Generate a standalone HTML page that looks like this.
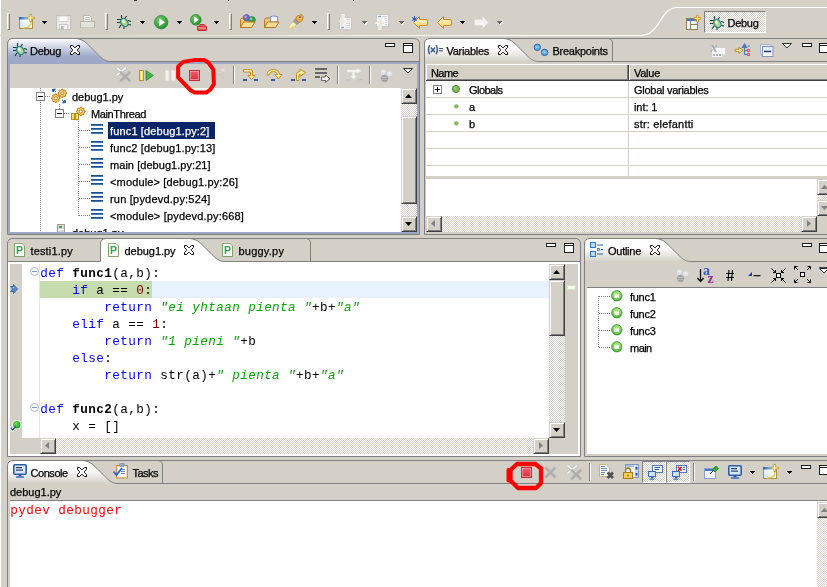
<!DOCTYPE html>
<html>
<head>
<meta charset="utf-8">
<title>Debug - Eclipse</title>
<style>
html,body{margin:0;padding:0;overflow:hidden;}
body{width:827px;height:587px;overflow:hidden;background:#d4d0c8;position:relative;font-family:"Liberation Sans",sans-serif;font-size:11px;color:#000;}
.a{position:absolute;}
.t{position:absolute;white-space:pre;font-size:11px;line-height:13px;-webkit-text-stroke:0.25px currentColor;}
.m{position:absolute;white-space:pre;font-family:"Liberation Mono",monospace;font-size:12.67px;letter-spacing:0.398px;line-height:17px;color:#000;}
.k{color:#0000ff;}
.s{color:#00aa00;font-style:italic;}
.n{color:#800000;}
.b{font-weight:bold;}
.sep{position:absolute;width:3px;box-sizing:border-box;border:1px solid;border-color:#fff #808080 #808080 #fff;}
.sep2{position:absolute;width:1px;background:#808080;border-right:1px solid #fff;}
.arr{position:absolute;width:0;height:0;border-left:3px solid transparent;border-right:3px solid transparent;border-top:3px solid #000;}
.arr.g{border-top-color:#808080;}
.sb{position:absolute;background:#d4d0c8;box-sizing:border-box;border:1px solid;border-color:#d4d0c8 #404040 #404040 #d4d0c8;box-shadow:inset 1px 1px 0 #fff,inset -1px -1px 0 #808080;}
.track,.chk{background-color:#fff;background-image:linear-gradient(45deg,#d4d0c8 25%,transparent 25%,transparent 75%,#d4d0c8 75%),linear-gradient(45deg,#d4d0c8 25%,transparent 25%,transparent 75%,#d4d0c8 75%);background-size:2px 2px;background-position:0 0,1px 1px;}
.track{position:absolute;}
.min{position:absolute;width:8px;height:2px;border:1px solid #1c1c1c;background:#fff;}
.max{position:absolute;width:8px;height:8px;border:1px solid #1c1c1c;background:linear-gradient(#fff 0,#fff 1px,#1c1c1c 1px,#1c1c1c 2px,#fff 2px);}
svg{position:absolute;overflow:visible;}
</style>
</head>
<body>
<div id="root" style="position:absolute;left:0;top:0;width:827px;height:587px;will-change:transform;overflow:hidden;">
<div class="a" style="left:0px;top:0px;width:1px;height:587px;background:#fff;"></div>
<div class="a" style="left:134px;top:0px;width:3px;height:1px;background:#303030;"></div>
<div class="a" style="left:228px;top:0px;width:1px;height:1px;background:#303030;"></div>
<div class="a" style="left:353px;top:0px;width:1px;height:1px;background:#303030;"></div>
<div class="sep" style="left:7px;top:13px;height:17px;"></div>
<div class="sep" style="left:105px;top:13px;height:17px;"></div>
<div class="sep" style="left:229px;top:13px;height:17px;"></div>
<div class="sep" style="left:327px;top:13px;height:17px;"></div>
<svg width="5" height="3" viewBox="0 0 5 3" style="left:42px;top:21px;"><path d="M0,0 h5 v1 h-1 v1 h-1 v1 h-1 v-1 h-1 v-1 h-1 z" fill="#000"/></svg>
<svg width="5" height="3" viewBox="0 0 5 3" style="left:140px;top:21px;"><path d="M0,0 h5 v1 h-1 v1 h-1 v1 h-1 v-1 h-1 v-1 h-1 z" fill="#000"/></svg>
<svg width="5" height="3" viewBox="0 0 5 3" style="left:177px;top:21px;"><path d="M0,0 h5 v1 h-1 v1 h-1 v1 h-1 v-1 h-1 v-1 h-1 z" fill="#000"/></svg>
<svg width="5" height="3" viewBox="0 0 5 3" style="left:214px;top:21px;"><path d="M0,0 h5 v1 h-1 v1 h-1 v1 h-1 v-1 h-1 v-1 h-1 z" fill="#000"/></svg>
<svg width="5" height="3" viewBox="0 0 5 3" style="left:312px;top:21px;"><path d="M0,0 h5 v1 h-1 v1 h-1 v1 h-1 v-1 h-1 v-1 h-1 z" fill="#000"/></svg>
<svg width="5" height="3" viewBox="0 0 5 3" style="left:460px;top:21px;"><path d="M0,0 h5 v1 h-1 v1 h-1 v1 h-1 v-1 h-1 v-1 h-1 z" fill="#000"/></svg>
<svg width="6" height="4" viewBox="0 0 6 4" style="left:362px;top:21px;"><path d="M1,1 h5 v1 h-1 v1 h-1 v1 h-1 v-1 h-1 v-1 h-1 z" fill="#fff"/><path d="M0,0 h5 v1 h-1 v1 h-1 v1 h-1 v-1 h-1 v-1 h-1 z" fill="#686868"/></svg>
<svg width="6" height="4" viewBox="0 0 6 4" style="left:399px;top:21px;"><path d="M1,1 h5 v1 h-1 v1 h-1 v1 h-1 v-1 h-1 v-1 h-1 z" fill="#fff"/><path d="M0,0 h5 v1 h-1 v1 h-1 v1 h-1 v-1 h-1 v-1 h-1 z" fill="#686868"/></svg>
<svg width="6" height="4" viewBox="0 0 6 4" style="left:497px;top:21px;"><path d="M1,1 h5 v1 h-1 v1 h-1 v1 h-1 v-1 h-1 v-1 h-1 z" fill="#fff"/><path d="M0,0 h5 v1 h-1 v1 h-1 v1 h-1 v-1 h-1 v-1 h-1 z" fill="#686868"/></svg>
<svg width="827" height="40" viewBox="0 0 827 40" style="left:0px;top:0px;"><defs><linearGradient id="pg" gradientUnits="userSpaceOnUse" x1="0" y1="0" x2="560" y2="0"><stop offset="0" stop-color="#d8d4cc"/><stop offset="1" stop-color="#ffffff"/></linearGradient></defs><path d="M0,35.5 L640,35.5 C652,35.5 656,27 661,19.6 C666,12 669,7.5 678,7.5 L827,7.5" fill="none" stroke="url(#pg)" stroke-width="1.2"/></svg>
<div class="a chk" style="left:704px;top:11px;width:62px;height:22px;box-sizing:border-box;border:1px solid;border-color:#808080 #fff #fff #808080;"></div>
<div class="t" style="left:727.5px;top:17px;letter-spacing:-0.283px;">Debug</div>
<svg width="16" height="16" viewBox="0 0 16 16" style="left:19px;top:14px;">
<defs><linearGradient id="nwg19" x1="0" y1="1" x2="1" y2="0"><stop offset="0" stop-color="#c4e0f8"/><stop offset="0.700" stop-color="#ffffff"/></linearGradient>
<linearGradient id="nwt19" x1="0" y1="0" x2="1" y2="0"><stop offset="0" stop-color="#2060c0"/><stop offset="1" stop-color="#a0c4ec"/></linearGradient></defs>
<rect x="0.500" y="3.500" width="13" height="11" fill="url(#nwg19)" stroke="#a89048" stroke-width="1"/>
<rect x="0" y="3" width="9" height="2.500" fill="url(#nwt19)"/>
<path d="M12.300,7 C12.300,11 9.500,13.800 4.500,14" fill="none" stroke="#f0c840" stroke-width="1.300"/>
<path d="M11.700,1 L11.700,7 M8.700,4 L14.700,4" stroke="#c8a020" stroke-width="2.600" stroke-linecap="round"/>
<path d="M11.700,1.200 L11.700,6.800 M8.900,4 L14.500,4" stroke="#fffad0" stroke-width="1"/>
</svg>
<svg width="15" height="15" viewBox="0 0 15 15" style="left:56px;top:15px;">
<rect x="0.500" y="0.500" width="14" height="14" fill="#ecebe8" stroke="#c2c0bc"/>
<rect x="3" y="1" width="9" height="5.500" fill="#fbfbfa" stroke="#d0ceca" stroke-width="0.800"/>
<rect x="3.500" y="9.500" width="8" height="5" fill="#f4f3f0" stroke="#c4c2be" stroke-width="0.800"/>
<rect x="5" y="11" width="2.500" height="3.500" fill="#b4b2ae"/>
</svg>
<svg width="15" height="15" viewBox="0 0 15 15" style="left:80px;top:15px;">
<path d="M3.500,6 L3.5,0.500 L9.5,0.5 L11.5,2.5 L11.5,6" fill="#f8f8f6" stroke="#b8b4ac"/>
<path d="M5,2.500 L10,2.500 M5,4.500 L10,4.500" stroke="#c0bcb4" stroke-width="1"/>
<rect x="0.5" y="6.5" width="14" height="6" fill="#e4e2dc" stroke="#b8b4ac"/>
<rect x="1.500" y="12" width="12" height="2" fill="#d0ccc4"/>
</svg>
<svg width="16" height="16" viewBox="0 0 16 16" style="left:116px;top:14px;">
<g stroke="#0e4430" stroke-width="1.150" fill="none">
<path d="M5.5,1 L5.5,4.5 M10.5,2 L9,4.5 M1,5.500 L5,5.5 M1,8.5 L4,8.5 M12,6.500 L15,7.5 M12,10.5 L15,11 M3,14 L5,11 M8,15 L8,12.500"/>
</g>
<ellipse cx="8.300" cy="8.5" rx="3.3" ry="4.4" transform="rotate(-35 8.3 8.5)" fill="#a8d890" stroke="#2a7c8c" stroke-width="1.2"/>
<ellipse cx="7.500" cy="7.5" rx="1.3" ry="2" transform="rotate(-35 7.5 7.5)" fill="#e4f4c8"/>
</svg>
<svg width="14.4" height="14.4" viewBox="0 0 14.4 14.4" style="left:153.5px;top:14.5px;">
<defs><radialGradient id="rg153" cx="0.4" cy="0.35" r="0.7"><stop offset="0" stop-color="#7cd070"/><stop offset="1" stop-color="#1c8c28"/></radialGradient></defs>
<circle cx="7.2" cy="7.2" r="6.7" fill="url(#rg153)" stroke="#2c8c34" stroke-width="0.8"/>
<path d="M5.184,3.24 L5.184,11.16 L10.8,7.2 Z" fill="#ffffff"/>
</svg>
<svg width="11.6" height="11.6" viewBox="0 0 11.6 11.6" style="left:190px;top:14px;">
<defs><radialGradient id="rg190" cx="0.4" cy="0.35" r="0.7"><stop offset="0" stop-color="#7cd070"/><stop offset="1" stop-color="#1c8c28"/></radialGradient></defs>
<circle cx="5.8" cy="5.8" r="5.3" fill="url(#rg190)" stroke="#2c8c34" stroke-width="0.8"/>
<path d="M4.176,2.61 L4.176,8.99 L8.7,5.8 Z" fill="#ffffff"/>
</svg>
<svg width="10" height="7" viewBox="0 0 10 7" style="left:197px;top:23.5px;">
<rect x="3" y="0.5" width="4" height="2" fill="none" stroke="#c82828" stroke-width="1"/>
<rect x="0.5" y="2" width="9" height="4.500" rx="0.8" fill="#e85050" stroke="#c02020" stroke-width="1"/>
<rect x="1" y="3.5" width="8" height="1" fill="#f8b0b0"/>
</svg>
<svg width="16" height="16" viewBox="0 0 16 16" style="left:240px;top:14px;">
<path d="M0.500,13.5 L0.5,5.500 L2,4 L6,4 L7,5.500 L11.500,5.5 L11.500,8" fill="#f0c878" stroke="#b87820" stroke-width="1"/>
<circle cx="6.500" cy="3.8" r="3.2" fill="#7868c0" stroke="#5848a0" stroke-width="0.6"/><circle cx="5.5" cy="2.800" r="1.2" fill="#b0a8e0"/><circle cx="12" cy="6" r="3.4" fill="#38a058" stroke="#1c7838" stroke-width="0.6"/><circle cx="11" cy="4.800" r="1.2" fill="#88d8a0"/>
<path d="M0.5,13.500 L3.5,8 L15,8 L11.5,13.5 Z" fill="#f8dc98" stroke="#b87820" stroke-width="1"/>
</svg>
<svg width="16" height="16" viewBox="0 0 16 16" style="left:264px;top:14px;">
<path d="M0.500,13.5 L0.5,5.500 L2,4 L6,4 L7,5.500 L11.500,5.5 L11.500,8" fill="#f0c878" stroke="#b87820" stroke-width="1"/>
<rect x="6.5" y="2.500" width="7" height="5.5" fill="#f4f8ff" stroke="#8098c8" stroke-width="1"/><rect x="8" y="1" width="4" height="2" fill="#a8b8e0"/>
<path d="M0.5,13.500 L3.5,8 L15,8 L11.5,13.5 Z" fill="#f8dc98" stroke="#b87820" stroke-width="1"/>
</svg>
<svg width="16" height="16" viewBox="0 0 16 16" style="left:288px;top:14px;">
<path d="M9,2 L13.500,0.500 L15.5,2.5 L14,7 L11,8.500 L7.500,5 Z" fill="#f0b040" stroke="#c07818" stroke-width="0.800"/>
<circle cx="12" cy="3.200" r="0.9" fill="#3858b0"/>
<path d="M7.5,5 L11,8.5 L8.500,11 L5,7.500 Z" fill="#a09c98" stroke="#787470" stroke-width="0.6"/>
<path d="M5,7.5 L8.500,11 L2,15 L0.5,13.5 Z" fill="#fff8d0" stroke="#e8c050" stroke-width="0.800"/>
<path d="M1,14.500 L5,11.500 L6.500,12" fill="#f8d060"/>
</svg>
<svg width="15" height="16" viewBox="0 0 15 16" style="left:337px;top:14px;">
<rect x="2.500" y="3.500" width="12" height="12" fill="#f6f6f6" stroke="#c8c8cc"/>
<path d="M9,5.500 L13,5.500 M10,7.500 L13,7.500 M9,9.500 L13,9.500 M8,11.500 L13,11.500 M8,13.500 L13,13.500" stroke="#d4d4d8" stroke-width="1"/>
<rect x="4.300" y="12.800" width="2.600" height="1.400" fill="#8890a8"/>
<path d="M4.300,0.500 L7.200,0.500 L7.200,6.500 L9.700,6.500 L5.700,11.600 L1.500,6.500 L4.300,6.500 Z" fill="#ece9df" stroke="#f8f7f3" stroke-width="0.800"/>
<path d="M4.300,0.500 L4.300,6.500 L1.500,6.500 L5.700,11.600" fill="none" stroke="#d8d4c8" stroke-width="0.600"/>
</svg>
<svg width="15" height="16" viewBox="0 0 15 16" style="left:375px;top:14px;">
<rect x="1.500" y="0.500" width="12" height="12" fill="#f6f6f6" stroke="#c8c8cc"/>
<path d="M7,2.500 L12,2.500 M9,4.500 L12,4.500 M10,6.500 L12,6.500 M10,8.500 L12,8.500 M10,10.500 L12,10.500" stroke="#d4d4d8" stroke-width="1"/>
<rect x="3.300" y="1.800" width="2.600" height="1.400" fill="#8890a8"/>
<path d="M3.300,15.500 L6.200,15.500 L6.200,9.500 L8.700,9.500 L4.700,4.400 L0.500,9.500 L3.300,9.500 Z" fill="#ece9df" stroke="#f8f7f3" stroke-width="0.800"/>
<path d="M6.200,15.500 L6.200,9.500 L8.700,9.500 L4.700,4.400" fill="none" stroke="#d8d4c8" stroke-width="0.600"/>
</svg>
<svg width="15" height="13" viewBox="0 0 15 13" style="left:413px;top:15.5px;">
<defs><linearGradient id="yag" x1="0" y1="0" x2="0" y2="1"><stop offset="0" stop-color="#fff8d8"/><stop offset="1" stop-color="#f8d060"/></linearGradient></defs>
<g><path d="M0.5,6.500 L6.500,0.500 L6.5,3.500 L13,3.5 Q14.5,3.5 14.5,5 L14.5,8 Q14.5,9.5 13,9.5 L6.500,9.5 L6.5,12.500 Z" fill="url(#yag)" stroke="#d08818" stroke-width="1" stroke-linejoin="round"/></g><path d="M1.500,0 L1.500,6 M-1,1.500 L4,4.500 M4,1.500 L-1,4.500" stroke="#2050b0" stroke-width="0.900"/>
</svg>
<svg width="15" height="13" viewBox="0 0 15 13" style="left:437px;top:15.5px;">
<defs><linearGradient id="yag" x1="0" y1="0" x2="0" y2="1"><stop offset="0" stop-color="#fff8d8"/><stop offset="1" stop-color="#f8d060"/></linearGradient></defs>
<g><path d="M0.5,6.500 L6.500,0.500 L6.5,3.500 L13,3.5 Q14.5,3.5 14.5,5 L14.5,8 Q14.5,9.5 13,9.5 L6.500,9.5 L6.5,12.500 Z" fill="url(#yag)" stroke="#d08818" stroke-width="1" stroke-linejoin="round"/></g>
</svg>
<svg width="15" height="13" viewBox="0 0 15 13" style="left:474px;top:15.5px;">
<defs><linearGradient id="yag" x1="0" y1="0" x2="0" y2="1"><stop offset="0" stop-color="#fff8d8"/><stop offset="1" stop-color="#f8d060"/></linearGradient></defs>
<g transform="translate(15,0) scale(-1,1)"><path d="M0.5,6.500 L6.500,0.500 L6.5,3.500 L13,3.5 Q14.5,3.5 14.5,5 L14.5,8 Q14.5,9.5 13,9.5 L6.500,9.5 L6.5,12.500 Z" fill="#f4f3ef" stroke="#e0ded8" stroke-width="1" stroke-linejoin="round"/></g>
</svg>
<svg width="15" height="15" viewBox="0 0 15 15" style="left:686px;top:14.5px;">
<rect x="0.5" y="3.5" width="11" height="11" fill="#ecf4ff" stroke="#908050" stroke-width="1"/>
<rect x="1" y="4" width="10" height="2" fill="#4878c8"/>
<path d="M4.500,6 L4.5,14 M4.500,9.500 L11,9.5" stroke="#908050" stroke-width="1"/>
<path d="M11.5,0 L11.5,7 M8,3.500 L15,3.500" stroke="#c89820" stroke-width="2.600"/>
<path d="M11.500,0.700 L11.5,6.300 M8.700,3.500 L14.300,3.5" stroke="#fff4b0" stroke-width="1"/>
</svg>
<svg width="16" height="16" viewBox="0 0 16 16" style="left:708.5px;top:14.5px;">
<g stroke="#0e4430" stroke-width="1.150" fill="none">
<path d="M5.5,1 L5.5,4.5 M10.5,2 L9,4.5 M1,5.500 L5,5.5 M1,8.5 L4,8.5 M12,6.500 L15,7.5 M12,10.5 L15,11 M3,14 L5,11 M8,15 L8,12.500"/>
</g>
<ellipse cx="8.300" cy="8.5" rx="3.3" ry="4.4" transform="rotate(-35 8.3 8.5)" fill="#a8d890" stroke="#2a7c8c" stroke-width="1.2"/>
<ellipse cx="7.500" cy="7.5" rx="1.3" ry="2" transform="rotate(-35 7.5 7.5)" fill="#e4f4c8"/>
</svg>
<svg width="827" height="240" viewBox="0 0 827 240" style="left:0px;top:0px;">
<defs><linearGradient id="gact" x1="0" y1="0" x2="0" y2="1"><stop offset="0" stop-color="#ffffff"/><stop offset="0.15" stop-color="#e6e9f3"/><stop offset="0.7" stop-color="#9fa9c8"/><stop offset="1" stop-color="#9da7c6"/></linearGradient></defs>
<rect x="8" y="62" width="411" height="172" fill="#9da7c6"/>
<path d="M8,64 L8,44 Q8,39 13,39 L76,39 C82,39.5 85,42 90,47 L98,55 C102,59 105,61.5 111,61.5 L111,64 Z" fill="url(#gact)"/>
<path d="M76,38.5 C82,39 85,41.5 90,46.5 L98,54.5 C102,58.5 105,61.5 111,61.5 L419,61.5" fill="none" stroke="#808080" stroke-width="1"/>
<path d="M7.5,234.5 L7.5,44 Q7.5,38.5 13,38.5 L414,38.5 Q419.5,38.5 419.5,44 L419.5,234.5 Z" fill="none" stroke="#808080" stroke-width="1"/>
<rect x="10" y="64" width="407" height="24" fill="#d4d0c8"/>
<rect x="10" y="88" width="407" height="144" fill="#ffffff"/>
</svg>
<div class="t" style="left:30px;top:45px;letter-spacing:-0.283px;">Debug</div>
<svg width="10" height="10" viewBox="0 0 10 10" style="left:70px;top:45px;"><polygon points="0.5,0.5 2.5,0.5 4.5,2.5 5.5,2.5 7.5,0.5 9.5,0.5 9.5,2.5 7.5,4.5 7.5,5.5 9.5,7.5 9.5,9.5 7.5,9.5 5.5,7.5 4.5,7.5 2.5,9.5 0.5,9.5 0.5,7.5 2.5,5.5 2.5,4.5 0.5,2.5" fill="#fff" stroke="#000" stroke-width="1"/></svg>
<div class="min" style="left:385px;top:43px;"></div>
<div class="max" style="left:403px;top:43px;"></div>
<div class="a" style="left:108px;top:122px;width:107px;height:17px;background:#0a246a;"></div>
<div class="t" style="left:72px;top:91px;letter-spacing:-0.009px;">debug1.py</div>
<div class="t" style="left:91px;top:108px;letter-spacing:-0.369px;">MainThread</div>
<div class="t" style="left:110px;top:125px;letter-spacing:0.151px;color:#fff;">func1 [debug1.py:2]</div>
<div class="t" style="left:110px;top:142px;letter-spacing:0.133px;">func2 [debug1.py:13]</div>
<div class="t" style="left:110px;top:159px;letter-spacing:0.049px;">main [debug1.py:21]</div>
<div class="t" style="left:110px;top:176px;letter-spacing:0.154px;">&lt;module&gt; [debug1.py:26]</div>
<div class="t" style="left:110px;top:193px;letter-spacing:0.210px;">run [pydevd.py:524]</div>
<div class="t" style="left:110px;top:210px;letter-spacing:0.186px;">&lt;module&gt; [pydevd.py:668]</div>
<div class="a" style="left:70px;top:225px;width:80px;height:7px;overflow:hidden;"><div class="t" style="left:2px;top:2px;">debug1.py</div></div>
<div class="track" style="left:401px;top:88px;width:16px;height:144px;"></div>
<div class="sb" style="left:401px;top:88px;width:16px;height:16px;"></div>
<svg width="7" height="4" viewBox="0 0 7 4" style="left:405px;top:94px;"><path d="M0,4 L3.5,0 L7,4 Z" fill="#000"/></svg>
<div class="sb" style="left:401px;top:116px;width:16px;height:88px;"></div>
<div class="sb" style="left:401px;top:216px;width:16px;height:16px;"></div>
<svg width="7" height="4" viewBox="0 0 7 4" style="left:405px;top:222px;"><path d="M0,0 L3.5,4 L7,0 Z" fill="#000"/></svg>
<svg width="60" height="50" viewBox="0 0 60 50" style="left:166px;top:50px;"><path d="M17.1,11.9 L28.1,10.1 L38.4,10.1 L42.6,12.8 L47.3,19.6 L47.9,34.1 L44.3,39.6 L40.1,42.6 L28.6,42.6 L24.3,40.1 L14.1,29.4 L12.1,27.3 L12.1,16.6 Z" fill="none" stroke="#ff0000" stroke-width="4" stroke-linejoin="round"/></svg>
<svg width="16" height="16" viewBox="0 0 16 16" style="left:12px;top:42px;">
<g stroke="#0e4430" stroke-width="1.150" fill="none">
<path d="M5.5,1 L5.5,4.5 M10.5,2 L9,4.5 M1,5.500 L5,5.5 M1,8.5 L4,8.5 M12,6.500 L15,7.5 M12,10.5 L15,11 M3,14 L5,11 M8,15 L8,12.500"/>
</g>
<ellipse cx="8.300" cy="8.5" rx="3.3" ry="4.4" transform="rotate(-35 8.3 8.5)" fill="#a8d890" stroke="#2a7c8c" stroke-width="1.2"/>
<ellipse cx="7.500" cy="7.5" rx="1.3" ry="2" transform="rotate(-35 7.5 7.5)" fill="#e4f4c8"/>
</svg>
<svg width="15" height="15" viewBox="0 0 15 15" style="left:116px;top:67px;"><path d="M1,1 L9.500,8 M9.500,1 L1,8" stroke="#c4c2bc" stroke-width="3" stroke-linecap="round"/><path d="M1,1 L9.500,8 M9.500,1 L1,8" stroke="#fdfdfd" stroke-width="1.600" stroke-linecap="round"/><path d="M5,5.500 L13.500,13.500 M13.500,5.500 L5,13.500" stroke="#c6c4be" stroke-width="3.400" stroke-linecap="round"/><path d="M5,5.500 L13.500,13.500 M13.500,5.500 L5,13.500" stroke="#acacac" stroke-width="1.900" stroke-linecap="round"/></svg>
<svg width="15" height="11" viewBox="0 0 15 11" style="left:139px;top:70px;"><rect x="0.5" y="0.5" width="4" height="10" fill="#f8e070" stroke="#c09020"/><rect x="2" y="1.5" width="1" height="8" fill="#fff8c0"/><path d="M7,0.500 L14.5,5.5 L7,10.5 Z" fill="#48b048" stroke="#2c8c34" stroke-width="0.8"/></svg>
<svg width="11" height="11" viewBox="0 0 11 11" style="left:165px;top:70px;"><rect x="0.5" y="0.5" width="3.5" height="10" fill="#f4f2ec" stroke="#e4e2dc"/><rect x="6.500" y="0.5" width="3.5" height="10" fill="#f4f2ec" stroke="#e4e2dc"/></svg>
<svg width="11" height="11" viewBox="0 0 11 11" style="left:189px;top:70px;"><defs><linearGradient id="tg189" x1="0" y1="0" x2="0" y2="1"><stop offset="0" stop-color="#f46070"/><stop offset="1" stop-color="#dc2838"/></linearGradient></defs><rect x="0.5" y="0.5" width="10" height="10" fill="url(#tg189)" stroke="#c8283c"/><rect x="1.5" y="1.5" width="8" height="8" fill="none" stroke="#f8a0a8" stroke-width="0.8"/></svg>
<svg width="10" height="14" viewBox="0 0 10 14" style="left:216px;top:67px;"><circle cx="7" cy="3" r="2.200" fill="#ecd8dc" stroke="#dcc8cc" stroke-width="0.6"/><path d="M7,5 L7,12 M1,7.500 L4,7.5 L4,10" stroke="#c4c4c8" stroke-width="0.900" fill="none"/></svg>
<div class="sep2" style="left:233px;top:66px;height:18px;"></div>
<div class="sep2" style="left:337px;top:66px;height:18px;"></div>
<div class="sep2" style="left:369px;top:66px;height:18px;"></div>
<svg width="17" height="14" viewBox="0 0 17 14" style="left:242px;top:68px;"><path d="M1.5,1.500 L8.5,1.5 Q10.5,1.5 10.5,3.500 L10.5,7.5 L13,7.500 L9.5,11.5 L6,7.500 L8.5,7.5 L8.5,4 L1.500,4 Z" fill="#fff0a0" stroke="#c48c1c" stroke-width="1" stroke-linejoin="round"/><rect x="1" y="11" width="4" height="2" fill="#2c5ca8"/><rect x="12" y="11" width="4" height="2" fill="#2c5ca8"/></svg>
<svg width="17" height="14" viewBox="0 0 17 14" style="left:266px;top:68px;"><path d="M1,7 Q1,1.500 7.5,1.5 Q13,1.5 13.500,6.500 L16,6.5 L12.5,11 L9,6.500 L11.500,6.5 Q11,3.500 7.5,3.5 Q3.500,3.500 3,7 Z" fill="#fff0a0" stroke="#c48c1c" stroke-width="1" stroke-linejoin="round"/><rect x="5" y="11" width="4" height="2" fill="#2c5ca8"/></svg>
<svg width="17" height="14" viewBox="0 0 17 14" style="left:290px;top:68px;"><path d="M6.500,12.500 L6.500,6.500 Q6.500,3.500 10,3.5 L10,1 L15.5,4.700 L10,8.5 L10,6 Q9,6 9,7.500 L9,12.5 Z" fill="#fff0a0" stroke="#c48c1c" stroke-width="1" stroke-linejoin="round"/><rect x="1" y="11" width="4" height="2" fill="#2c5ca8"/><rect x="12" y="11" width="4" height="2" fill="#2c5ca8"/></svg>
<svg width="16" height="15" viewBox="0 0 16 15" style="left:315px;top:68px;"><rect x="0" y="0" width="12" height="2" fill="#686868"/><rect x="0" y="4" width="12" height="2" fill="#686868"/><rect x="0" y="8" width="5" height="2" fill="#686868"/><path d="M6.500,9 L10.500,9 L10.5,7 L15,10.700 L10.500,14.500 L10.5,12.500 L6.5,12.5 Z" fill="#f4f4f4" stroke="#585858" stroke-width="0.900"/></svg>
<svg width="16" height="14" viewBox="0 0 16 14" style="left:346px;top:68px;"><path d="M1,2 L11,2 L11,0.500 L15,3 L11,5.500 L11,4 L8.500,4 L8.5,8 L10.500,8 L7.5,11 L4.500,8 L6.500,8 L6.500,4 L1,4 Z" fill="#fbfaf8" stroke="#e4e2dc" stroke-width="0.6"/><rect x="0" y="11" width="4" height="1.500" fill="#c4c2c8"/><rect x="12" y="11" width="4" height="1.500" fill="#c4c2c8"/></svg>
<svg width="14" height="13" viewBox="0 0 14 13" style="left:379.5px;top:68.5px;"><defs><radialGradient id="gb379" cx="0.400" cy="0.350" r="0.700"><stop offset="0" stop-color="#f4f4f4"/><stop offset="1" stop-color="#c8c8c8"/></radialGradient></defs><circle cx="3.800" cy="3.600" r="3.400" fill="url(#gb379)"/><circle cx="10" cy="5.500" r="3.300" fill="url(#gb379)"/><circle cx="4.600" cy="9.400" r="3.500" fill="#a0a0a0"/><rect x="2" y="8" width="5.200" height="1" fill="#c4c4c4"/><rect x="1.500" y="10" width="6.200" height="1" fill="#b8b8b8"/></svg>
<svg width="10" height="6" viewBox="0 0 10 6" style="left:403px;top:68px;"><path d="M0.5,0.5 L9.500,0.5 L5,5 Z" fill="#fff" stroke="#303030" stroke-width="1"/></svg>
<div class="a" style="left:40px;top:88px;width:1px;height:144px;background-image:linear-gradient(#808080 50%,transparent 50%);background-size:1px 2px;"></div>
<div class="a" style="left:45px;top:96px;width:6px;height:1px;background-image:linear-gradient(90deg,#808080 50%,transparent 50%);background-size:2px 1px;"></div>
<svg width="9" height="9" viewBox="0 0 9 9" style="left:36px;top:92px;"><rect x="0.5" y="0.5" width="8" height="8" fill="#fff" stroke="#808080"/><rect x="2" y="4" width="5" height="1" fill="#000"/></svg>
<div class="a" style="left:59px;top:104px;width:1px;height:5px;background-image:linear-gradient(#808080 50%,transparent 50%);background-size:1px 2px;"></div>
<svg width="9" height="9" viewBox="0 0 9 9" style="left:55px;top:109px;"><rect x="0.5" y="0.5" width="8" height="8" fill="#fff" stroke="#808080"/><rect x="2" y="4" width="5" height="1" fill="#000"/></svg>
<div class="a" style="left:64px;top:113px;width:6px;height:1px;background-image:linear-gradient(90deg,#808080 50%,transparent 50%);background-size:2px 1px;"></div>
<div class="a" style="left:78px;top:121px;width:1px;height:96px;background-image:linear-gradient(#808080 50%,transparent 50%);background-size:1px 2px;"></div>
<div class="a" style="left:79px;top:130px;width:11px;height:1px;background-image:linear-gradient(90deg,#808080 50%,transparent 50%);background-size:2px 1px;"></div>
<svg width="12" height="10" viewBox="0 0 12 10" style="left:91px;top:124px;"><g><rect x="0" y="0" width="12" height="1" fill="#1c4f8c"/><rect x="0" y="1" width="12" height="1" fill="#3c7cc0"/><rect x="0" y="4" width="12" height="1" fill="#1c4f8c"/><rect x="0" y="5" width="12" height="1" fill="#3c7cc0"/><rect x="0" y="8" width="12" height="1" fill="#1c4f8c"/><rect x="0" y="9" width="12" height="1" fill="#3c7cc0"/></g></svg>
<div class="a" style="left:79px;top:147px;width:11px;height:1px;background-image:linear-gradient(90deg,#808080 50%,transparent 50%);background-size:2px 1px;"></div>
<svg width="12" height="10" viewBox="0 0 12 10" style="left:91px;top:141px;"><g><rect x="0" y="0" width="12" height="1" fill="#1c4f8c"/><rect x="0" y="1" width="12" height="1" fill="#3c7cc0"/><rect x="0" y="4" width="12" height="1" fill="#1c4f8c"/><rect x="0" y="5" width="12" height="1" fill="#3c7cc0"/><rect x="0" y="8" width="12" height="1" fill="#1c4f8c"/><rect x="0" y="9" width="12" height="1" fill="#3c7cc0"/></g></svg>
<div class="a" style="left:79px;top:164px;width:11px;height:1px;background-image:linear-gradient(90deg,#808080 50%,transparent 50%);background-size:2px 1px;"></div>
<svg width="12" height="10" viewBox="0 0 12 10" style="left:91px;top:158px;"><g><rect x="0" y="0" width="12" height="1" fill="#1c4f8c"/><rect x="0" y="1" width="12" height="1" fill="#3c7cc0"/><rect x="0" y="4" width="12" height="1" fill="#1c4f8c"/><rect x="0" y="5" width="12" height="1" fill="#3c7cc0"/><rect x="0" y="8" width="12" height="1" fill="#1c4f8c"/><rect x="0" y="9" width="12" height="1" fill="#3c7cc0"/></g></svg>
<div class="a" style="left:79px;top:181px;width:11px;height:1px;background-image:linear-gradient(90deg,#808080 50%,transparent 50%);background-size:2px 1px;"></div>
<svg width="12" height="10" viewBox="0 0 12 10" style="left:91px;top:175px;"><g><rect x="0" y="0" width="12" height="1" fill="#1c4f8c"/><rect x="0" y="1" width="12" height="1" fill="#3c7cc0"/><rect x="0" y="4" width="12" height="1" fill="#1c4f8c"/><rect x="0" y="5" width="12" height="1" fill="#3c7cc0"/><rect x="0" y="8" width="12" height="1" fill="#1c4f8c"/><rect x="0" y="9" width="12" height="1" fill="#3c7cc0"/></g></svg>
<div class="a" style="left:79px;top:198px;width:11px;height:1px;background-image:linear-gradient(90deg,#808080 50%,transparent 50%);background-size:2px 1px;"></div>
<svg width="12" height="10" viewBox="0 0 12 10" style="left:91px;top:192px;"><g><rect x="0" y="0" width="12" height="1" fill="#1c4f8c"/><rect x="0" y="1" width="12" height="1" fill="#3c7cc0"/><rect x="0" y="4" width="12" height="1" fill="#1c4f8c"/><rect x="0" y="5" width="12" height="1" fill="#3c7cc0"/><rect x="0" y="8" width="12" height="1" fill="#1c4f8c"/><rect x="0" y="9" width="12" height="1" fill="#3c7cc0"/></g></svg>
<div class="a" style="left:79px;top:215px;width:11px;height:1px;background-image:linear-gradient(90deg,#808080 50%,transparent 50%);background-size:2px 1px;"></div>
<svg width="12" height="10" viewBox="0 0 12 10" style="left:91px;top:209px;"><g><rect x="0" y="0" width="12" height="1" fill="#1c4f8c"/><rect x="0" y="1" width="12" height="1" fill="#3c7cc0"/><rect x="0" y="4" width="12" height="1" fill="#1c4f8c"/><rect x="0" y="5" width="12" height="1" fill="#3c7cc0"/><rect x="0" y="8" width="12" height="1" fill="#1c4f8c"/><rect x="0" y="9" width="12" height="1" fill="#3c7cc0"/></g></svg>
<svg width="16" height="16" viewBox="0 0 16 16" style="left:51px;top:88px;"><polygon points="9.07,9.69 9.07,10.71 8.03,11.10 7.72,11.85 8.18,12.85 7.45,13.58 6.45,13.12 5.70,13.43 5.31,14.47 4.29,14.47 3.90,13.43 3.15,13.12 2.15,13.58 1.42,12.85 1.88,11.85 1.57,11.10 0.53,10.71 0.53,9.69 1.57,9.30 1.88,8.55 1.42,7.55 2.15,6.82 3.15,7.28 3.90,6.97 4.29,5.93 5.31,5.93 5.70,6.97 6.45,7.28 7.45,6.82 8.18,7.55 7.72,8.55 8.03,9.30" fill="#f8d468" stroke="#b86c10" stroke-width="0.9"/><circle cx="4.8" cy="10.2" r="1.548" fill="#fff" stroke="#b86c10" stroke-width="0.8"/><polygon points="15.57,4.79 15.57,5.81 14.53,6.20 14.22,6.95 14.68,7.95 13.95,8.68 12.95,8.22 12.20,8.53 11.81,9.57 10.79,9.57 10.40,8.53 9.65,8.22 8.65,8.68 7.92,7.95 8.38,6.95 8.07,6.20 7.03,5.81 7.03,4.79 8.07,4.40 8.38,3.65 7.92,2.65 8.65,1.92 9.65,2.38 10.40,2.07 10.79,1.03 11.81,1.03 12.20,2.07 12.95,2.38 13.95,1.92 14.68,2.65 14.22,3.65 14.53,4.40" fill="#f8d468" stroke="#b86c10" stroke-width="0.9"/><circle cx="11.3" cy="5.3" r="1.548" fill="#fff" stroke="#b86c10" stroke-width="0.8"/><path d="M1.500,1.5 L4.500,1 L2,4 Z M1.500,1.500 L5,4" fill="#2860b0" stroke="#2860b0" stroke-width="1"/><path d="M14.500,14.500 L11.5,15 L14,12 Z M14.500,14.5 L11,12" fill="#2860b0" stroke="#2860b0" stroke-width="1"/></svg>
<svg width="15" height="14" viewBox="0 0 15 14" style="left:71px;top:106px;"><polygon points="14.07,4.99 14.07,6.01 13.03,6.40 12.72,7.15 13.18,8.15 12.45,8.88 11.45,8.42 10.70,8.73 10.31,9.77 9.29,9.77 8.90,8.73 8.15,8.42 7.15,8.88 6.42,8.15 6.88,7.15 6.57,6.40 5.53,6.01 5.53,4.99 6.57,4.60 6.88,3.85 6.42,2.85 7.15,2.12 8.15,2.58 8.90,2.27 9.29,1.23 10.31,1.23 10.70,2.27 11.45,2.58 12.45,2.12 13.18,2.85 12.72,3.85 13.03,4.60" fill="#f8d468" stroke="#b86c10" stroke-width="0.9"/><circle cx="9.8" cy="5.5" r="1.548" fill="#fff" stroke="#b86c10" stroke-width="0.8"/><rect x="0.500" y="7.5" width="3" height="6" fill="#f8e070" stroke="#b8901c"/><rect x="4.500" y="7.5" width="3" height="6" fill="#f8e070" stroke="#b8901c"/></svg>
<div class="a" style="left:57px;top:224px;width:8px;height:8px;overflow:hidden;"><svg width="8" height="10" style="left:0;top:0;"><rect x="0.500" y="0.500" width="7" height="9" fill="#d8d8d4" stroke="#a0a098"/><rect x="2" y="2" width="3" height="2" fill="#40a060"/><rect x="1" y="5" width="6" height="1" fill="#fff"/></svg></div>
<svg width="827" height="240" viewBox="0 0 827 240" style="left:0px;top:0px;">
<defs><linearGradient id="gin" x1="0" y1="0" x2="0" y2="1"><stop offset="0" stop-color="#ffffff"/><stop offset="0.35" stop-color="#ffffff"/><stop offset="1" stop-color="#d4d0c8"/></linearGradient></defs>
<path d="M425,62 L425,44 Q425,39 430,39 L504,39 C510,39.5 513,42 518,47 L526,55 C530,59 533,61.5 539,61.5 L539,62 Z" fill="url(#gin)"/>
<path d="M504,38.5 C510,39 513,41.5 518,46.5 L526,54.5 C530,58.5 533,61.5 539,61.5 L830,61.5" fill="none" stroke="#808080" stroke-width="1"/>
<path d="M612.5,61.5 L612.5,43 Q612.5,39 608,38.5" fill="none" stroke="#808080" stroke-width="1"/>
<path d="M424.5,234.5 L424.5,44 Q424.5,38.5 430,38.5 L830,38.5 M424.5,234.5 L830,234.5" fill="none" stroke="#808080" stroke-width="1"/>
<rect x="426" y="64" width="402" height="168" fill="#ffffff"/>
</svg>
<div class="t" style="left:446.5px;top:45px;letter-spacing:-0.282px;">Variables</div>
<svg width="10" height="10" viewBox="0 0 10 10" style="left:498px;top:45px;"><polygon points="0.5,0.5 2.5,0.5 4.5,2.5 5.5,2.5 7.5,0.5 9.5,0.5 9.5,2.5 7.5,4.5 7.5,5.5 9.5,7.5 9.5,9.5 7.5,9.5 5.5,7.5 4.5,7.5 2.5,9.5 0.5,9.5 0.5,7.5 2.5,5.5 2.5,4.5 0.5,2.5" fill="#fff" stroke="#000" stroke-width="1"/></svg>
<div class="t" style="left:552.5px;top:45px;letter-spacing:-0.262px;">Breakpoints</div>
<div class="min" style="left:802px;top:43px;"></div>
<div class="max" style="left:819px;top:43px;"></div>
<div class="a" style="left:426px;top:64px;width:402px;height:17px;background:#d4d0c8;box-sizing:border-box;border-top:1px solid #fff;border-bottom:1px solid #404040;box-shadow:inset 0 -1px 0 #808080;"></div>
<div class="a" style="left:627px;top:65px;width:1px;height:15px;background:#808080;"></div>
<div class="a" style="left:628px;top:65px;width:1px;height:15px;background:#404040;"></div>
<div class="a" style="left:629px;top:65px;width:1px;height:15px;background:#fff;"></div>
<div class="a" style="left:426px;top:65px;width:1px;height:15px;background:#fff;"></div>
<div class="t" style="left:431px;top:67px;letter-spacing:-0.585px;">Name</div>
<div class="t" style="left:634px;top:67px;letter-spacing:-0.263px;">Value</div>
<div class="a" style="left:426px;top:97px;width:402px;height:1px;background:#d4d0c8;"></div>
<div class="a" style="left:426px;top:114px;width:402px;height:1px;background:#d4d0c8;"></div>
<div class="a" style="left:426px;top:131px;width:402px;height:1px;background:#d4d0c8;"></div>
<div class="a" style="left:426px;top:148px;width:402px;height:1px;background:#d4d0c8;"></div>
<div class="a" style="left:426px;top:165px;width:402px;height:1px;background:#d4d0c8;"></div>
<div class="a" style="left:628px;top:81px;width:1px;height:95px;background:#d4d0c8;"></div>
<div class="a" style="left:426px;top:176px;width:402px;height:3px;background:#d4d0c8;"></div>
<div class="t" style="left:469px;top:84px;letter-spacing:-0.542px;">Globals</div>
<div class="t" style="left:469px;top:101px;letter-spacing:0.000px;">a</div>
<div class="t" style="left:469px;top:118px;letter-spacing:0.000px;">b</div>
<div class="t" style="left:634px;top:84px;letter-spacing:-0.273px;">Global variables</div>
<div class="t" style="left:634px;top:101px;letter-spacing:-0.074px;">int: 1</div>
<div class="t" style="left:634px;top:118px;letter-spacing:0.189px;">str: elefantti</div>
<div class="track" style="left:426px;top:216px;width:391px;height:16px;"></div>
<div class="sb" style="left:426px;top:216px;width:16px;height:16px;"></div>
<svg width="4" height="7" viewBox="0 0 4 7" style="left:431px;top:220px;"><path d="M4,0 L0,3.5 L4,7 Z" fill="#808080"/></svg>
<div class="sb" style="left:801px;top:216px;width:16px;height:16px;"></div>
<svg width="4" height="7" viewBox="0 0 4 7" style="left:807px;top:220px;"><path d="M0,0 L4,3.5 L0,7 Z" fill="#808080"/></svg>
<div class="a" style="left:817px;top:216px;width:12px;height:16px;background:#d4d0c8;"></div>
<div class="track" style="left:817px;top:179px;width:16px;height:37px;"></div>
<div class="sb" style="left:817px;top:179px;width:16px;height:16px;"></div>
<svg width="7" height="4" viewBox="0 0 7 4" style="left:821px;top:185px;"><path d="M0,4 L3.5,0 L7,4 Z" fill="#808080"/></svg>
<div class="sb" style="left:817px;top:200px;width:16px;height:16px;"></div>
<svg width="7" height="4" viewBox="0 0 7 4" style="left:821px;top:206px;"><path d="M0,0 L3.5,4 L7,0 Z" fill="#808080"/></svg>
<svg width="16" height="10" viewBox="0 0 16 10" style="left:427px;top:45px;"><g fill="none" stroke="#3c5a8c" stroke-width="1.500"><path d="M2.700,0.200 Q0.300,4.700 2.700,9.300"/><path d="M3.800,2.500 L8,7.300 M8,2.500 L3.800,7.300"/><path d="M9.100,0.200 Q11.500,4.700 9.100,9.300"/></g><rect x="12" y="3" width="4" height="1.100" fill="#3c5a8c"/><rect x="12" y="5.300" width="4" height="1.100" fill="#3c5a8c"/></svg>
<svg width="16" height="14" viewBox="0 0 16 14" style="left:533px;top:43px;"><circle cx="4.300" cy="4.300" r="3.2" fill="#68a8e0" stroke="#2868a8" stroke-width="1"/><rect x="2.500" y="3.5" width="3.600" height="1" fill="#b8dcf8"/><circle cx="11.600" cy="9.400" r="3.2" fill="#68a8e0" stroke="#2868a8" stroke-width="1"/><rect x="9.800" y="8.600" width="3.6" height="1" fill="#b8dcf8"/></svg>
<svg width="16" height="15" viewBox="0 0 16 15" style="left:710px;top:43px;"><path d="M1.500,4.500 L15.500,4.500 L15.500,11.500 L12.500,14.500 L1.500,14.500 Z" fill="#f6f6f6" stroke="#d2d0d0" stroke-width="1"/><path d="M12.500,14.500 L12.500,11.500 L15.500,11.500" fill="#e4e0d8" stroke="#d2d0d0" stroke-width="0.800"/><text x="0.500" y="9.300" font-family="Liberation Serif,serif" font-style="italic" font-weight="bold" font-size="14" fill="#a4acbc">x</text><rect x="3" y="11" width="2" height="2" fill="#a8acb8"/><rect x="6" y="11" width="2" height="2" fill="#a8acb8"/><rect x="9" y="11" width="2" height="2" fill="#a8acb8"/></svg>
<svg width="17" height="14" viewBox="0 0 17 14" style="left:734px;top:43px;"><path d="M1,6.300 L5,6.300 L5,4.300 L9,7.300 L5,10.300 L5,8.400 L1,8.400 Z" fill="#fff4b0" stroke="#b8860b" stroke-width="0.900" stroke-linejoin="round"/><path d="M10.500,12 L10.500,2 M8.500,4.300 L10.500,1 L12.500,4.300 Z" stroke="#5878b8" stroke-width="1.200" fill="#5878b8"/><path d="M10.500,7.500 L13,7.500 M10.500,11.500 L13,11.500 M13.500,3 L16,3" stroke="#5878b8" stroke-width="1" fill="none"/><rect x="13" y="6" width="3" height="3" fill="#e8506c"/><rect x="14" y="7" width="1" height="1" fill="#f8b0c0"/><rect x="13" y="10" width="3" height="3" fill="#e8506c"/><rect x="14" y="11" width="1" height="1" fill="#f8b0c0"/></svg>
<svg width="14" height="13" viewBox="0 0 14 13" style="left:760px;top:44px;"><defs><linearGradient id="cag" x1="0" y1="0" x2="0" y2="1"><stop offset="0" stop-color="#d8ecfc"/><stop offset="1" stop-color="#ffffff"/></linearGradient></defs><rect x="0.500" y="0.500" width="10.500" height="10" fill="#dcecfc" stroke="#a8b8d8" stroke-width="1"/><rect x="2.500" y="2.500" width="10.500" height="10" fill="url(#cag)" stroke="#8890b8" stroke-width="1"/><rect x="4" y="6.700" width="7.200" height="1.500" fill="#183c78"/></svg>
<svg width="10" height="6" viewBox="0 0 10 6" style="left:782px;top:43px;"><path d="M0.5,0.5 L9.500,0.5 L5,5 Z" fill="#fff" stroke="#303030" stroke-width="1"/></svg>
<svg width="9" height="9" viewBox="0 0 9 9" style="left:433px;top:85px;"><rect x="0.5" y="0.5" width="8" height="8" fill="#fff" stroke="#808080"/><rect x="2" y="4" width="5" height="1" fill="#000"/><rect x="4" y="2" width="1" height="5" fill="#000"/></svg>
<svg width="9" height="9" viewBox="0 0 9 9" style="left:452px;top:85px;"><circle cx="4" cy="4" r="3.600" fill="#80b858" stroke="#4c8430" stroke-width="0.900"/><circle cx="3.200" cy="3.200" r="1.200" fill="#a0d080"/></svg>
<svg width="5" height="5" viewBox="0 0 5 5" style="left:454px;top:104px;"><circle cx="2.300" cy="2.300" r="1.900" fill="#88bc60" stroke="#70a448" stroke-width="0.500"/></svg>
<svg width="5" height="5" viewBox="0 0 5 5" style="left:454px;top:121px;"><circle cx="2.300" cy="2.300" r="1.900" fill="#88bc60" stroke="#70a448" stroke-width="0.500"/></svg>
<svg width="827" height="460" viewBox="0 0 827 460" style="left:0px;top:0px;">
<path d="M101,262 L101,244 Q101,239 106,239 L190,239 C196,239.5 199,242 204,247 L212,255 C216,259 219,261.5 225,261.5 L225,262 Z" fill="#ffffff"/>
<path d="M100.5,261.5 L100.5,244 Q100.5,238.5 106,238.5 L190,238.5 M190,238.5 C196,239 199,241.5 204,246.5 L212,254.5 C216,258.5 219,261.5 225,261.5 L580,261.5" fill="none" stroke="#808080" stroke-width="1"/>
<path d="M8,261.5 L100,261.5" fill="none" stroke="#808080" stroke-width="1"/>
<path d="M310.5,261 L310.5,243 Q310.500,239 306,238.5" fill="none" stroke="#808080" stroke-width="1"/>
<path d="M7.500,456.5 L7.5,244 Q7.5,238.5 13,238.5 L575,238.5 Q580.5,238.5 580.5,244 L580.5,456.5 Z" fill="none" stroke="#808080" stroke-width="1"/>
<rect x="8" y="262" width="572" height="194" fill="#ffffff"/>
</svg>
<div class="t" style="left:30.5px;top:245px;letter-spacing:0.148px;">testi1.py</div>
<div class="t" style="left:124.5px;top:245px;letter-spacing:-0.042px;">debug1.py</div>
<div class="t" style="left:238.5px;top:245px;letter-spacing:0.222px;">buggy.py</div>
<svg width="10" height="10" viewBox="0 0 10 10" style="left:184px;top:245px;"><polygon points="0.5,0.5 2.5,0.5 4.5,2.5 5.5,2.5 7.5,0.5 9.5,0.5 9.5,2.5 7.5,4.5 7.5,5.5 9.5,7.5 9.5,9.5 7.5,9.5 5.5,7.5 4.5,7.5 2.5,9.5 0.5,9.5 0.5,7.5 2.5,5.5 2.5,4.5 0.5,2.5" fill="#fff" stroke="#000" stroke-width="1"/></svg>
<div class="min" style="left:546px;top:243px;"></div>
<div class="max" style="left:564px;top:243px;"></div>
<div class="a" style="left:10px;top:264px;width:12px;height:190px;background:#d4d0c8;"></div>
<div class="a" style="left:22px;top:438px;width:18px;height:16px;background:#d4d0c8;"></div>
<div class="a" style="left:39px;top:264px;width:1px;height:174px;background:#e0e4f0;"></div>
<div class="a" style="left:40px;top:281px;width:112px;height:17px;background:#c6dbae;"></div>
<div class="a" style="left:152px;top:281px;width:397px;height:17px;background:#e8f2fe;"></div>
<div class="track" style="left:549px;top:264px;width:16px;height:174px;"></div>
<div class="sb" style="left:549px;top:264px;width:16px;height:16px;"></div>
<svg width="7" height="4" viewBox="0 0 7 4" style="left:553px;top:270px;"><path d="M0,4 L3.5,0 L7,4 Z" fill="#000"/></svg>
<div class="sb" style="left:549px;top:280px;width:16px;height:56px;"></div>
<div class="sb" style="left:549px;top:422px;width:16px;height:16px;"></div>
<svg width="7" height="4" viewBox="0 0 7 4" style="left:553px;top:428px;"><path d="M0,0 L3.5,4 L7,0 Z" fill="#000"/></svg>
<div class="track" style="left:40px;top:438px;width:509px;height:16px;"></div>
<div class="sb" style="left:40px;top:438px;width:16px;height:16px;"></div>
<svg width="4" height="7" viewBox="0 0 4 7" style="left:45px;top:442px;"><path d="M4,0 L0,3.5 L4,7 Z" fill="#808080"/></svg>
<div class="sb" style="left:533px;top:438px;width:16px;height:16px;"></div>
<svg width="4" height="7" viewBox="0 0 4 7" style="left:539px;top:442px;"><path d="M0,0 L4,3.5 L0,7 Z" fill="#808080"/></svg>
<div class="a" style="left:549px;top:438px;width:16px;height:16px;background:#d4d0c8;"></div>
<div class="a" style="left:565px;top:264px;width:13px;height:190px;background:#d4d0c8;"></div>
<div class="a" style="left:567px;top:285px;width:9px;height:5px;background:#f4faf0;border:1px solid #cfe6c0;box-sizing:border-box;"></div>
<div class="m" style="left:40.300px;top:265px;"><span class="k">def</span> <span class="b">func1</span>(a,b):</div>
<div class="m" style="left:40.300px;top:282px;">    <span class="k">if</span> a == <span class="n">0</span>:</div>
<div class="m" style="left:40.300px;top:299px;">        <span class="k">return</span> <span class="s">"ei yhtaan pienta "</span>+b+<span class="s">"a"</span></div>
<div class="m" style="left:40.300px;top:316px;">    <span class="k">elif</span> a == <span class="n">1</span>:</div>
<div class="m" style="left:40.300px;top:333px;">        <span class="k">return</span> <span class="s">"1 pieni "</span>+b</div>
<div class="m" style="left:40.300px;top:350px;">    <span class="k">else</span>:</div>
<div class="m" style="left:40.300px;top:367px;">        <span class="k">return</span> str(a)+<span class="s">" pienta "</span>+b+<span class="s">"a"</span></div>
<div class="m" style="left:40.300px;top:401px;"><span class="k">def</span> <span class="b">func2</span>(a,b):</div>
<div class="m" style="left:40.300px;top:418px;">    x = []</div>
<svg width="11" height="14" viewBox="0 0 11 14" style="left:14px;top:243px;"><path d="M0.500,0.500 L8,0.500 L10.500,3 L10.500,13.500 L0.500,13.500 Z" fill="#fff" stroke="#8c9c50" stroke-width="1" stroke-dasharray="1,1"/><path d="M0.500,0.500 L8,0.500 L10.500,3 L10.500,13.500 L0.500,13.500 Z" fill="none" stroke="#5c8c3c" stroke-width="1" stroke-dasharray="1,1" stroke-dashoffset="1" opacity="0.800"/><text x="2" y="11" font-family="Liberation Sans,sans-serif" font-weight="bold" font-size="10.500" fill="#28a850">P</text></svg>
<svg width="11" height="14" viewBox="0 0 11 14" style="left:108px;top:243px;"><path d="M0.500,0.500 L8,0.500 L10.500,3 L10.500,13.500 L0.500,13.500 Z" fill="#fff" stroke="#8c9c50" stroke-width="1" stroke-dasharray="1,1"/><path d="M0.500,0.500 L8,0.500 L10.500,3 L10.500,13.500 L0.500,13.500 Z" fill="none" stroke="#5c8c3c" stroke-width="1" stroke-dasharray="1,1" stroke-dashoffset="1" opacity="0.800"/><text x="2" y="11" font-family="Liberation Sans,sans-serif" font-weight="bold" font-size="10.500" fill="#28a850">P</text></svg>
<svg width="11" height="14" viewBox="0 0 11 14" style="left:222px;top:243px;"><path d="M0.500,0.500 L8,0.500 L10.500,3 L10.500,13.500 L0.500,13.500 Z" fill="#fff" stroke="#8c9c50" stroke-width="1" stroke-dasharray="1,1"/><path d="M0.500,0.500 L8,0.500 L10.500,3 L10.500,13.500 L0.500,13.500 Z" fill="none" stroke="#5c8c3c" stroke-width="1" stroke-dasharray="1,1" stroke-dashoffset="1" opacity="0.800"/><text x="2" y="11" font-family="Liberation Sans,sans-serif" font-weight="bold" font-size="10.500" fill="#28a850">P</text></svg>
<svg width="9" height="9" viewBox="0 0 9 9" style="left:30px;top:267px;"><circle cx="4.500" cy="4.500" r="4" fill="#f4f6fa" stroke="#b4c0d4" stroke-width="1"/><rect x="2" y="4" width="5" height="1" fill="#8c9cbc"/></svg>
<svg width="9" height="9" viewBox="0 0 9 9" style="left:30px;top:403px;"><circle cx="4.500" cy="4.500" r="4" fill="#f4f6fa" stroke="#b4c0d4" stroke-width="1"/><rect x="2" y="4" width="5" height="1" fill="#8c9cbc"/></svg>
<svg width="8" height="10" viewBox="0 0 8 10" style="left:10px;top:284px;"><path d="M0.500,2.500 L3.500,2.500 L3.500,0.500 L7.500,5 L3.500,9.500 L3.500,7.500 L0.500,7.500 L2.500,5 Z" fill="#4c8cd0" stroke="#2c5c98" stroke-width="0.800"/><path d="M3,3.500 L4.500,3.500" stroke="#a8d0f0" stroke-width="1"/></svg>
<svg width="12" height="12" viewBox="0 0 12 12" style="left:10px;top:420px;"><circle cx="6.800" cy="4.800" r="4.600" fill="#fff"/><path d="M0,7.500 L2.500,10 L6,6" stroke="#fff" stroke-width="3" fill="none"/><defs><radialGradient id="bpg" cx="0.400" cy="0.350" r="0.700"><stop offset="0" stop-color="#70e060"/><stop offset="1" stop-color="#10981c"/></radialGradient></defs><circle cx="6.800" cy="4.800" r="3.700" fill="url(#bpg)"/><path d="M0.800,7.500 L2.500,10 L5.500,6.500" stroke="#184c78" stroke-width="1.300" fill="none"/></svg>
<svg width="827" height="460" viewBox="0 0 827 460" style="left:0px;top:0px;">
<path d="M585,262 L585,244 Q585,239 590,239 L656,239 C662,239.5 665,242 670,247 L678,255 C682,259 685,261.5 691,261.5 L691,262 Z" fill="url(#gin)"/>
<path d="M656,238.5 C662,239 665,241.5 670,246.5 L678,254.5 C682,258.5 685,261.5 691,261.5 L830,261.5" fill="none" stroke="#808080" stroke-width="1"/>
<path d="M584.5,456.5 L584.5,244 Q584.5,238.5 590,238.5 L830,238.5 M584.5,456.5 L830,456.5" fill="none" stroke="#808080" stroke-width="1"/>
<rect x="587" y="287" width="241" height="167" fill="#ffffff"/>
<rect x="587" y="287" width="241" height="1" fill="#808080"/>
</svg>
<div class="t" style="left:608px;top:245px;letter-spacing:-0.265px;">Outline</div>
<svg width="10" height="10" viewBox="0 0 10 10" style="left:650px;top:245px;"><polygon points="0.5,0.5 2.5,0.5 4.5,2.5 5.5,2.5 7.5,0.5 9.5,0.5 9.5,2.5 7.5,4.5 7.5,5.5 9.5,7.5 9.5,9.5 7.5,9.5 5.5,7.5 4.5,7.5 2.5,9.5 0.5,9.5 0.5,7.5 2.5,5.5 2.5,4.5 0.5,2.5" fill="#fff" stroke="#000" stroke-width="1"/></svg>
<div class="min" style="left:802px;top:243px;"></div>
<div class="max" style="left:819px;top:243px;"></div>
<svg width="10" height="5" viewBox="0 0 10 5" style="left:819px;top:267px;"><path d="M0.5,0.5 L9.5,0.5 L5,5 Z" fill="#fff" stroke="#404040" stroke-width="1"/></svg>
<div class="t" style="left:630px;top:291px;letter-spacing:-0.282px;">func1</div>
<div class="t" style="left:630px;top:308px;letter-spacing:-0.282px;">func2</div>
<div class="t" style="left:630px;top:325px;letter-spacing:-0.282px;">func3</div>
<div class="t" style="left:630px;top:342px;letter-spacing:-0.535px;">main</div>
<svg width="13" height="15" viewBox="0 0 13 15" style="left:590px;top:242px;"><rect x="0.500" y="0.500" width="5" height="5" fill="#b8dcf8" stroke="#2878d0" stroke-width="1"/><rect x="0.500" y="9.500" width="5" height="5" fill="#b8dcf8" stroke="#2878d0" stroke-width="1"/><rect x="7" y="2.500" width="6" height="1" fill="#2060b0"/><rect x="7" y="11.500" width="6" height="1" fill="#2060b0"/><rect x="7.500" y="6.500" width="2" height="2" fill="#d8ecfc" stroke="#2878d0" stroke-width="0.800"/><rect x="11" y="7" width="2" height="1" fill="#2060b0"/></svg>
<svg width="14" height="13" viewBox="0 0 14 13" style="left:676px;top:269px;"><defs><radialGradient id="gb676" cx="0.400" cy="0.350" r="0.700"><stop offset="0" stop-color="#f4f4f4"/><stop offset="1" stop-color="#c8c8c8"/></radialGradient></defs><circle cx="3.800" cy="3.600" r="3.400" fill="url(#gb676)"/><circle cx="10" cy="5.500" r="3.300" fill="url(#gb676)"/><circle cx="4.600" cy="9.400" r="3.500" fill="#a0a0a0"/><rect x="2" y="8" width="5.200" height="1" fill="#c4c4c4"/><rect x="1.500" y="10" width="6.200" height="1" fill="#b8b8b8"/></svg>
<svg width="18" height="16" viewBox="0 0 18 16" style="left:697px;top:267px;"><path d="M3.500,2 L3.500,14 M0.500,11 L3.500,14.500 L6.500,11" stroke="#000" stroke-width="1.200" fill="none"/><text x="6" y="8" font-family="Liberation Serif,serif" font-weight="bold" font-size="14" fill="#3060c8">a</text><text x="10.500" y="15.800" font-family="Liberation Serif,serif" font-weight="bold" font-size="14" fill="#902890">z</text></svg>
<svg width="8" height="11" viewBox="0 0 8 11" style="left:726px;top:270px;"><path d="M3,0 L2,11 M6.500,0 L5.500,11 M0,3.500 L8,3.500 M0,7.500 L8,7.500" stroke="#000" stroke-width="1.100" fill="none"/></svg>
<svg width="13" height="5" viewBox="0 0 13 5" style="left:748px;top:272px;"><path d="M0,4 L4,4 L4,0 Z" fill="#2030c0"/><rect x="5.500" y="3" width="7" height="1.300" fill="#202020"/></svg>
<svg width="15" height="15" viewBox="0 0 15 15" style="left:771px;top:268px;"><rect x="5.500" y="5.500" width="4" height="4" fill="#fff" stroke="#000" stroke-width="1"/><path d="M0.500,0.500 L4.500,4.500 M14.500,0.500 L10.500,4.500 M0.500,14.500 L4.500,10.500 M14.500,14.500 L10.500,10.500" stroke="#000" stroke-width="1"/><path d="M2,4.500 L4.500,4.500 L4.500,2 M13,4.500 L10.500,4.500 L10.500,2 M2,10.500 L4.500,10.500 L4.500,13 M13,10.500 L10.500,10.500 L10.500,13" stroke="#000" stroke-width="1" fill="none"/></svg>
<svg width="17" height="17" viewBox="0 0 17 17" style="left:794px;top:266px;"><rect x="6.500" y="6.500" width="4" height="4" fill="#fff" stroke="#000" stroke-width="1"/><path d="M0.500,0.500 L4,4 M16.500,0.500 L13,4 M0.500,16.500 L4,13 M16.500,16.500 L13,13" stroke="#000" stroke-width="1"/><path d="M0.500,3.500 L0.500,0.500 L3.500,0.500 M16.500,3.500 L16.500,0.500 L13.500,0.500 M0.500,13.500 L0.500,16.500 L3.500,16.500 M16.500,13.500 L16.500,16.500 L13.500,16.500" stroke="#000" stroke-width="1" fill="none"/></svg>
<svg width="10" height="6" viewBox="0 0 10 6" style="left:819px;top:268px;"><path d="M0.5,0.5 L9.500,0.5 L5,5 Z" fill="#fff" stroke="#303030" stroke-width="1"/></svg>
<div class="a" style="left:598px;top:296px;width:1px;height:52px;background-image:linear-gradient(#808080 50%,transparent 50%);background-size:1px 2px;"></div>
<div class="a" style="left:599px;top:296px;width:11px;height:1px;background-image:linear-gradient(90deg,#808080 50%,transparent 50%);background-size:2px 1px;"></div>
<svg width="12" height="12" viewBox="0 0 12 12" style="left:611px;top:289.5px;"><defs><radialGradient id="og296" cx="0.500" cy="0.400" r="0.600"><stop offset="0" stop-color="#d0f4a8"/><stop offset="0.600" stop-color="#88d060"/><stop offset="1" stop-color="#30a028"/></radialGradient></defs><circle cx="5.800" cy="5.800" r="5.200" fill="url(#og296)" stroke="#38a030" stroke-width="0.800"/><path d="M3.500,8 L3.500,3.500 L5.800,5.500 L8,3.500 L8,8 Z" fill="#fff"/></svg>
<div class="a" style="left:599px;top:313px;width:11px;height:1px;background-image:linear-gradient(90deg,#808080 50%,transparent 50%);background-size:2px 1px;"></div>
<svg width="12" height="12" viewBox="0 0 12 12" style="left:611px;top:306.5px;"><defs><radialGradient id="og313" cx="0.500" cy="0.400" r="0.600"><stop offset="0" stop-color="#d0f4a8"/><stop offset="0.600" stop-color="#88d060"/><stop offset="1" stop-color="#30a028"/></radialGradient></defs><circle cx="5.800" cy="5.800" r="5.200" fill="url(#og313)" stroke="#38a030" stroke-width="0.800"/><path d="M3.500,8 L3.500,3.500 L5.800,5.500 L8,3.500 L8,8 Z" fill="#fff"/></svg>
<div class="a" style="left:599px;top:330px;width:11px;height:1px;background-image:linear-gradient(90deg,#808080 50%,transparent 50%);background-size:2px 1px;"></div>
<svg width="12" height="12" viewBox="0 0 12 12" style="left:611px;top:323.5px;"><defs><radialGradient id="og330" cx="0.500" cy="0.400" r="0.600"><stop offset="0" stop-color="#d0f4a8"/><stop offset="0.600" stop-color="#88d060"/><stop offset="1" stop-color="#30a028"/></radialGradient></defs><circle cx="5.800" cy="5.800" r="5.200" fill="url(#og330)" stroke="#38a030" stroke-width="0.800"/><path d="M3.500,8 L3.500,3.500 L5.800,5.500 L8,3.500 L8,8 Z" fill="#fff"/></svg>
<div class="a" style="left:599px;top:347px;width:11px;height:1px;background-image:linear-gradient(90deg,#808080 50%,transparent 50%);background-size:2px 1px;"></div>
<svg width="12" height="12" viewBox="0 0 12 12" style="left:611px;top:340.5px;"><defs><radialGradient id="og347" cx="0.500" cy="0.400" r="0.600"><stop offset="0" stop-color="#d0f4a8"/><stop offset="0.600" stop-color="#88d060"/><stop offset="1" stop-color="#30a028"/></radialGradient></defs><circle cx="5.800" cy="5.800" r="5.200" fill="url(#og347)" stroke="#38a030" stroke-width="0.800"/><path d="M3.500,8 L3.500,3.500 L5.800,5.500 L8,3.500 L8,8 Z" fill="#fff"/></svg>
<svg width="827" height="587" viewBox="0 0 827 587" style="left:0px;top:0px;">
<path d="M8,484 L8,466 Q8,461 13,461 L83,461 C89,461.5 92,464 97,469 L105,477 C109,481 112,483.5 118,483.5 L118,484 Z" fill="url(#gin)"/>
<path d="M83,460.5 C89,461 92,463.5 97,468.5 L105,476.5 C109,480.5 112,483.5 118,483.5 L830,483.5" fill="none" stroke="#808080" stroke-width="1"/>
<path d="M162.5,483 L162.5,465 Q162.5,461 158,460.5" fill="none" stroke="#808080" stroke-width="1"/>
<path d="M7.5,590 L7.5,466 Q7.5,460.5 13,460.5 L830,460.5" fill="none" stroke="#808080" stroke-width="1"/>
</svg>
<div class="t" style="left:30.5px;top:467px;letter-spacing:-0.437px;">Console</div>
<svg width="10" height="10" viewBox="0 0 10 10" style="left:77px;top:467px;"><polygon points="0.5,0.5 2.5,0.5 4.5,2.5 5.5,2.5 7.5,0.5 9.5,0.5 9.5,2.5 7.5,4.5 7.5,5.5 9.5,7.5 9.5,9.5 7.5,9.5 5.5,7.5 4.5,7.5 2.5,9.5 0.5,9.5 0.5,7.5 2.5,5.5 2.5,4.5 0.5,2.5" fill="#fff" stroke="#000" stroke-width="1"/></svg>
<div class="t" style="left:132.5px;top:467px;letter-spacing:-0.523px;">Tasks</div>
<div class="t" style="left:10px;top:486px;letter-spacing:-0.009px;">debug1.py</div>
<div class="a" style="left:10px;top:500px;width:820px;height:90px;background:#fff;border-top:1px solid #808080;"></div>
<div class="m" style="left:10.300px;top:502px;color:#ff0000;">pydev debugger</div>
<div class="track" style="left:817px;top:502px;width:16px;height:90px;"></div>
<div class="sb" style="left:817px;top:502px;width:16px;height:16px;"></div>
<svg width="7" height="4" viewBox="0 0 7 4" style="left:821px;top:508px;"><path d="M0,4 L3.5,0 L7,4 Z" fill="#808080"/></svg>
<div class="min" style="left:801px;top:465px;"></div>
<div class="max" style="left:819px;top:465px;"></div>
<div class="sep2" style="left:589px;top:463px;height:18px;"></div>
<div class="sep2" style="left:693px;top:463px;height:18px;"></div>
<svg width="5" height="3" viewBox="0 0 5 3" style="left:750px;top:471px;"><path d="M0,0 h5 v1 h-1 v1 h-1 v1 h-1 v-1 h-1 v-1 h-1 z" fill="#000"/></svg>
<svg width="5" height="3" viewBox="0 0 5 3" style="left:787px;top:471px;"><path d="M0,0 h5 v1 h-1 v1 h-1 v1 h-1 v-1 h-1 v-1 h-1 z" fill="#000"/></svg>
<svg width="14" height="14" viewBox="0 0 14 14" style="left:13px;top:464px;"><rect x="0.800" y="0.800" width="12.400" height="9.400" rx="1" fill="#d8e8fc" stroke="#2c5cb0" stroke-width="1.600"/><rect x="3" y="3" width="6" height="1.200" fill="#283c70"/><rect x="3" y="5.500" width="7" height="1.200" fill="#283c70"/><rect x="5.500" y="11" width="3" height="1.500" fill="#2c5cb0"/><rect x="3" y="12.300" width="8" height="1.500" fill="#3c70c8"/></svg>
<svg width="15" height="16" viewBox="0 0 15 16" style="left:113px;top:463px;"><rect x="3.500" y="2.500" width="11" height="12.500" fill="#f8e0b0" stroke="#c89048" stroke-width="1"/><rect x="5" y="4" width="8" height="9.500" fill="#fff"/><rect x="6.500" y="0.500" width="5" height="3" rx="1" fill="#98a8c8" stroke="#7080a8" stroke-width="0.600"/><path d="M8,6.500 L12,6.500 M8,8.500 L12,8.500 M8,10.500 L12,10.500" stroke="#7088c0" stroke-width="1"/><path d="M0.500,8.500 L3.500,12 L9,5" stroke="#1c68d8" stroke-width="1.800" fill="none"/></svg>
<svg width="50" height="40" viewBox="0 0 50 40" style="left:500px;top:455px;"><path d="M17,9 L35.500,9 L41,13.500 L41,28 L36,33 L18,33 L10.500,25.500 L10.500,15 Z" fill="none" stroke="#ff0000" stroke-width="4.300" stroke-linejoin="round"/><path d="M8.500,15 L8.500,25.500" stroke="#ff0000" stroke-width="4" stroke-linecap="round"/></svg>
<svg width="11" height="11" viewBox="0 0 11 11" style="left:521px;top:467px;"><defs><linearGradient id="tg521" x1="0" y1="0" x2="0" y2="1"><stop offset="0" stop-color="#f46070"/><stop offset="1" stop-color="#dc2838"/></linearGradient></defs><rect x="0.5" y="0.5" width="10" height="10" fill="url(#tg521)" stroke="#c8283c"/><rect x="1.5" y="1.5" width="8" height="8" fill="none" stroke="#f8a0a8" stroke-width="0.8"/></svg>
<svg width="11" height="11" viewBox="0 0 11 11" style="left:545px;top:466.5px;"><path d="M1.300,1.300 L9.700,9.700 M9.700,1.300 L1.300,9.700" stroke="#c6c4be" stroke-width="3.600" stroke-linecap="round"/><path d="M1.300,1.300 L9.700,9.700 M9.700,1.300 L1.300,9.700" stroke="#acacac" stroke-width="2" stroke-linecap="round"/></svg>
<svg width="15" height="15" viewBox="0 0 15 15" style="left:567px;top:465px;"><path d="M1,1 L9.500,8 M9.500,1 L1,8" stroke="#c4c2bc" stroke-width="3" stroke-linecap="round"/><path d="M1,1 L9.500,8 M9.500,1 L1,8" stroke="#fdfdfd" stroke-width="1.600" stroke-linecap="round"/><path d="M5,5.500 L13.500,13.500 M13.500,5.500 L5,13.500" stroke="#c6c4be" stroke-width="3.400" stroke-linecap="round"/><path d="M5,5.500 L13.500,13.500 M13.500,5.500 L5,13.500" stroke="#acacac" stroke-width="1.900" stroke-linecap="round"/></svg>
<svg width="16" height="15" viewBox="0 0 16 15" style="left:599px;top:464px;"><path d="M0.500,0.500 L7,0.500 L10.500,4 L10.500,12.500 L0.500,12.500 Z" fill="#fffef8" stroke="#c4b484" stroke-width="1"/><path d="M2,2.500 L6,2.500 M2,4.500 L8,4.500 M2,6.500 L8,6.500 M2,8.500 L6,8.500 M2,10.500 L5,10.500" stroke="#6088c8" stroke-width="1"/><path d="M8.500,8.500 L14,14 M14,8.500 L8.500,14" stroke="#505050" stroke-width="2.600"/></svg>
<svg width="16" height="15" viewBox="0 0 16 15" style="left:623px;top:464px;"><rect x="2.500" y="0.500" width="13" height="13" fill="#e8f0fc" stroke="#8098c8" stroke-width="1"/><rect x="3" y="1" width="8" height="2" fill="#a8c0e8"/><rect x="12" y="1" width="3" height="12" fill="#c8d8f0"/><rect x="12.500" y="3" width="2" height="2.500" fill="#2850a8"/><rect x="12.500" y="9" width="2" height="2.500" fill="#2850a8"/><path d="M2.500,8.500 L2.500,6.500 Q2.500,4 5,4 Q7.500,4 7.500,6.500 L7.500,8.500" stroke="#a07820" stroke-width="1.300" fill="none"/><rect x="0.500" y="8.500" width="9" height="6" fill="#f8d048" stroke="#a87c18" stroke-width="1"/><rect x="4.500" y="10.500" width="1" height="2" fill="#604008"/></svg>
<div class="a chk" style="left:642px;top:461px;width:24px;height:22px;box-sizing:border-box;border:1px solid;border-color:#808080 #fff #fff #808080;"></div>
<div class="a chk" style="left:666px;top:461px;width:24px;height:22px;box-sizing:border-box;border:1px solid;border-color:#808080 #fff #fff #808080;"></div>
<svg width="15" height="15" viewBox="0 0 15 15" style="left:648px;top:465px;"><rect x="4.500" y="0.500" width="10" height="7" fill="#f4f8ff" stroke="#5078c0" stroke-width="1"/><path d="M6.500,2.500 L12,2.500 M6.500,4.500 L11,4.500" stroke="#3058a8" stroke-width="1"/><rect x="0.500" y="6.500" width="7" height="5" fill="#d0e0f8" stroke="#3c68b8" stroke-width="1"/><rect x="3" y="12" width="2" height="1.500" fill="#3c68b8"/><rect x="1.500" y="13.500" width="5" height="1.200" fill="#3c68b8"/></svg>
<svg width="15" height="15" viewBox="0 0 15 15" style="left:672px;top:465px;"><rect x="4.500" y="0.500" width="10" height="7" fill="#f4f8ff" stroke="#5078c0" stroke-width="1"/><path d="M6,1.800 L9.500,5.800 M9.500,1.800 L6,5.800" stroke="#d82020" stroke-width="1.500"/><path d="M11,2.500 L13,2.500 M11,4.500 L13,4.500" stroke="#3058a8" stroke-width="1"/><rect x="0.500" y="6.500" width="7" height="5" fill="#d0e0f8" stroke="#3c68b8" stroke-width="1"/><rect x="3" y="12" width="2" height="1.500" fill="#3c68b8"/><rect x="1.500" y="13.500" width="5" height="1.200" fill="#3c68b8"/></svg>
<svg width="15" height="14" viewBox="0 0 15 14" style="left:704px;top:465px;"><rect x="0.500" y="3.500" width="11" height="10" fill="#eef4fc" stroke="#88a0d0" stroke-width="1"/><rect x="1" y="4" width="10" height="2" fill="#4878c8"/><path d="M6,9 L9.500,5.500" stroke="#404040" stroke-width="1"/><path d="M8.500,4.500 L12,1 L14.500,3.500 L11,7 Z" fill="#38a838" stroke="#1c7820" stroke-width="0.800"/></svg>
<svg width="14" height="14" viewBox="0 0 14 14" style="left:728px;top:465px;"><rect x="0.800" y="0.800" width="12.400" height="9.400" rx="1" fill="#d8e8fc" stroke="#2c5cb0" stroke-width="1.600"/><rect x="3" y="3" width="6" height="1.200" fill="#283c70"/><rect x="3" y="5.500" width="7" height="1.200" fill="#283c70"/><rect x="5.500" y="11" width="3" height="1.500" fill="#2c5cb0"/><rect x="3" y="12.300" width="8" height="1.500" fill="#3c70c8"/></svg>
<svg width="16" height="16" viewBox="0 0 16 16" style="left:763px;top:464px;">
<defs><linearGradient id="nwg763" x1="0" y1="1" x2="1" y2="0"><stop offset="0" stop-color="#c4e0f8"/><stop offset="0.700" stop-color="#ffffff"/></linearGradient>
<linearGradient id="nwt763" x1="0" y1="0" x2="1" y2="0"><stop offset="0" stop-color="#2060c0"/><stop offset="1" stop-color="#a0c4ec"/></linearGradient></defs>
<rect x="0.500" y="3.500" width="13" height="11" fill="url(#nwg763)" stroke="#a89048" stroke-width="1"/>
<rect x="0" y="3" width="9" height="2.500" fill="url(#nwt763)"/>
<path d="M12.300,7 C12.300,11 9.500,13.800 4.500,14" fill="none" stroke="#f0c840" stroke-width="1.300"/>
<path d="M11.700,1 L11.700,7 M8.700,4 L14.700,4" stroke="#c8a020" stroke-width="2.600" stroke-linecap="round"/>
<path d="M11.700,1.200 L11.700,6.800 M8.900,4 L14.500,4" stroke="#fffad0" stroke-width="1"/>
</svg>
</div>
</body>
</html>
